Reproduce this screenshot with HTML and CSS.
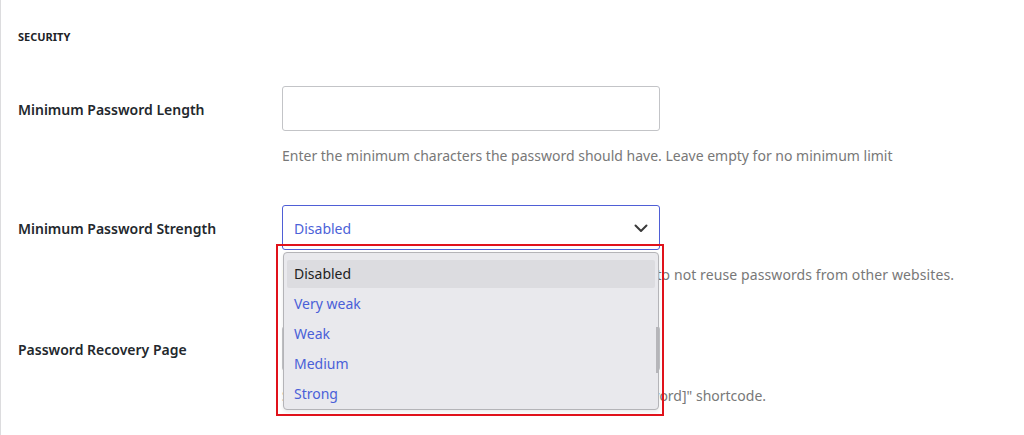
FILE: index.html
```html
<!DOCTYPE html>
<html lang="en">
<head>
<meta charset="utf-8">
<title>Security settings</title>
<link rel="stylesheet" href="styles.css">
</head>
<body>
<div class="page">
  <h2 class="section-title">SECURITY</h2>

  <div class="row row-first">
    <label class="label">Minimum Password Length</label>
    <div class="field">
      <div class="input"></div>
      <p class="help">Enter the minimum characters the password should have. Leave empty for no minimum limit</p>
    </div>
  </div>

  <div class="row">
    <label class="label">Minimum Password Strength</label>
    <div class="field field-open">
      <div class="select">
        <span class="select-value">Disabled</span>
        <svg class="chevron" width="14" height="9" viewBox="0 0 14 9"><path d="M1.5 1.5 L7 7 L12.5 1.5" fill="none" stroke="#3a3a3a" stroke-width="2" stroke-linecap="round" stroke-linejoin="round"/></svg>
      </div>
      <p class="help help-wide">Require a stronger password and encourage your users to not reuse passwords from other websites.</p>
      <ul class="dropdown">
        <li class="option option-active">Disabled</li>
        <li class="option">Very weak</li>
        <li class="option">Weak</li>
        <li class="option">Medium</li>
        <li class="option">Strong</li>
        <li class="scroll-thumb"></li>
      </ul>
      <div class="highlight-box"></div>
    </div>
  </div>

  <div class="row row-last">
    <label class="label">Password Recovery Page</label>
    <div class="field">
      <div class="input"></div>
      <p class="help">Select the page which contains the "[wppb-recover-password]" shortcode.</p>
    </div>
  </div>
</div>
</body>
</html>
```

FILE: styles.css
```css
html, body {
  margin: 0;
  padding: 0;
  background: #ffffff;
}

body {
  font-family: "Noto Sans", "Open Sans", sans-serif;
  color: #1e1e1e;
  overflow: hidden;
}

.page {
  border-left: 1px solid #dcdcde;
  min-height: 435px;
  padding: 0 0 0 17px;
  box-sizing: border-box;
}

.section-title {
  margin: 0;
  padding-top: 30px;
  font-size: 11px;
  line-height: 14px;
  font-weight: 700;
  color: #1d2327;
}

.row {
  display: grid;
  grid-template-columns: 264px 378px;
  margin-top: 39px;
}

.row-first {
  margin-top: 42px;
}

.row-last {
  margin-top: 41px;
}

.label {
  font-size: 14px;
  font-weight: 600;
  line-height: 20px;
  color: #23282d;
  padding-top: 14px;
}

.field {
  position: relative;
}

.input {
  height: 45px;
  box-sizing: border-box;
  border: 1px solid #c3c4c7;
  border-radius: 3px;
  background: #fff;
}

.help {
  margin: 15px 0 0;
  font-size: 14px;
  line-height: 20px;
  color: #787878;
  white-space: nowrap;
}

.help-wide {
  letter-spacing: 0.1px;
}

.select {
  height: 45px;
  box-sizing: border-box;
  border: 1px solid #4f5fd6;
  border-radius: 3px;
  display: flex;
  align-items: center;
  justify-content: space-between;
  padding: 1px 11px 0 11px;
}

.select-value {
  font-size: 14px;
  color: #4c62d8;
}

.chevron {
  display: block;
}

.dropdown {
  position: absolute;
  z-index: 5;
  top: 47px;
  left: 1px;
  width: 376px;
  height: 158px;
  margin: 0;
  padding: 7px 3px 0;
  box-sizing: border-box;
  list-style: none;
  background: #e9e9ed;
  border: 1px solid #b4b4b8;
  border-radius: 4px;
  box-shadow: 0 2px 4px rgba(0,0,0,0.08);
}

.option {
  height: 30px;
  line-height: 28px;
  padding-left: 7px;
  font-size: 14px;
  color: #4a60d8;
  border-radius: 2px;
}

.option-active {
  height: 28px;
  background: #dcdce0;
  color: #222222;
  margin-bottom: 2px;
}

.scroll-thumb {
  position: absolute;
  right: 0;
  top: 74px;
  width: 2px;
  height: 46px;
  background: #b6b6ba;
}

.highlight-box {
  position: absolute;
  z-index: 6;
  top: 39px;
  left: -6px;
  width: 388px;
  height: 172px;
  box-sizing: border-box;
  border: 2px solid #e0121b;
  pointer-events: none;
}
```
